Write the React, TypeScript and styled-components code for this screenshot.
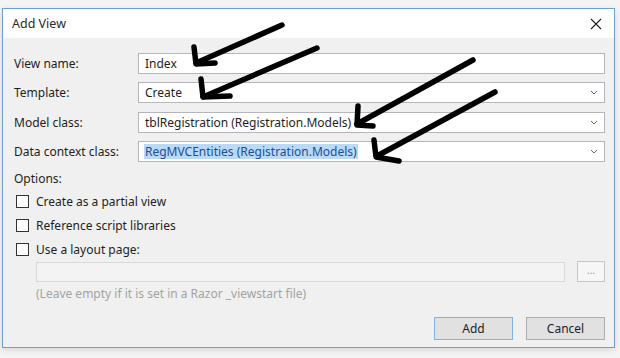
import { Fragment } from "react";
import styled, { createGlobalStyle } from "styled-components";

const GlobalStyle = createGlobalStyle`
   html, body {
      margin: 0;
      padding: 0;
      background: #f4f4f4;
   }
   body {
      font-family: "Noto Sans", "Open Sans", sans-serif;
      font-size: 12px;
      color: #1e1e1e;
   }
`;

// Área da captura: a janela fica com pequena margem em volta
const Screen = styled.div`
   position: relative;
   width: 620px;
   height: 358px;
   padding: 8px 5px 10px 2px;
   box-sizing: border-box;
   overflow: hidden;
`;

const Window = styled.section`
   height: 100%;
   box-sizing: border-box;
   border: 1px solid #6e9fd4;
   background: #f0f0f0;
   display: flex;
   flex-direction: column;
   box-shadow: 0 2px 6px rgba(0, 0, 0, 0.12);
`;

const TitleBar = styled.header`
   height: 29px;
   flex: none;
   background: #ffffff;
   display: flex;
   align-items: center;
   justify-content: space-between;
   padding: 0 6px 0 9px;
`;

const TitleText = styled.span`
   font-size: 12.5px;
   color: #2b2b2b;
`;

const CloseButton = styled.button`
   width: 24px;
   height: 22px;
   border: none;
   background: transparent;
   padding: 0;
   display: flex;
   align-items: center;
   justify-content: center;
`;

const Body = styled.div`
   flex: 1;
   display: flex;
   flex-direction: column;
   padding: 15px 9px 7px 11px;
`;

const FieldGrid = styled.div`
   display: grid;
   grid-template-columns: 124px 1fr;
   grid-auto-rows: 21px;
   row-gap: 8.4px;
   align-items: center;
`;

const Label = styled.label`
   white-space: nowrap;
`;

const Field = styled.div`
   height: 21px;
   box-sizing: border-box;
   border: 1px solid #b4b6bb;
   background: #ffffff;
   display: flex;
   align-items: center;
   justify-content: space-between;
   padding: 0 6px 0 5px;
`;

const FieldText = styled.span<{ $selected?: boolean }>`
   padding: 0 1px;
   background: ${({ $selected }) => ($selected ? "#b9d9f5" : "transparent")};
   color: ${({ $selected }) => ($selected ? "#1a4f9a" : "#1e1e1e")};
   line-height: 15px;
`;

const SectionLabel = styled.div`
   margin-top: 9px;
   line-height: 16px;
`;

const OptionList = styled.div`
   display: flex;
   flex-direction: column;
   gap: 8px;
   margin-top: 6px;
   padding-left: 2px;
`;

const OptionRow = styled.label`
   display: flex;
   align-items: center;
   gap: 7px;
   height: 16px;
`;

const CheckBox = styled.span`
   width: 13px;
   height: 13px;
   box-sizing: border-box;
   border: 1px solid #333333;
   background: #ffffff;
   flex: none;
`;

const LayoutRow = styled.div`
   display: flex;
   align-items: center;
   gap: 12px;
   margin-top: 4px;
   padding-left: 22px;
`;

const DisabledInput = styled.div`
   flex: 1;
   height: 20px;
   box-sizing: border-box;
   border: 1px solid #d9d9d9;
   background: #f3f3f3;
`;

const BrowseButton = styled.button`
   width: 28px;
   height: 21px;
   box-sizing: border-box;
   border: 1px solid #c6c6c6;
   background: #f6f6f6;
   color: #9a9a9a;
   font-family: inherit;
   font-size: 10px;
   padding: 0 0 4px;
`;

const Hint = styled.div`
   color: #a3a3a3;
   margin-top: 4px;
   padding-left: 22px;
   line-height: 16px;
`;

const ButtonBar = styled.div`
   margin-top: auto;
   display: flex;
   justify-content: flex-end;
   gap: 13px;
`;

const DialogButton = styled.button<{ $primary?: boolean }>`
   width: 79px;
   height: 23px;
   box-sizing: border-box;
   border: 1px solid ${({ $primary }) => ($primary ? "#7fb2e6" : "#adadad")};
   background: #e1e1e1;
   font-family: inherit;
   font-size: 12px;
   color: #1e1e1e;
   padding: 0;
`;

// Setas desenhadas à mão por cima do diálogo
const Annotations = styled.svg`
   position: absolute;
   top: 0;
   left: 0;
   pointer-events: none;
`;

function Chevron() {
   return (
      <svg width="8" height="5" viewBox="0 0 8 5">
         <path d="M1 1 L4 4 L7 1" fill="none" stroke="#6a6a6a" strokeWidth="1" />
      </svg>
   );
}

const fields = [
   { label: "View name:", value: "Index", select: false, selected: false },
   { label: "Template:", value: "Create", select: true, selected: false },
   { label: "Model class:", value: "tblRegistration (Registration.Models)", select: true, selected: false },
   { label: "Data context class:", value: "RegMVCEntities (Registration.Models)", select: true, selected: true },
];

const options = ["Create as a partial view", "Reference script libraries", "Use a layout page:"];

const arrows = [
   { line: "M282 25 L196 63", head: "M194 47 L196 64 L215 63" },
   { line: "M317 48 L203 97", head: "M201 79 L203 97 L230 96" },
   { line: "M473 60 L357 124", head: "M358 106 L357 125 L373 126" },
   { line: "M495 92 L377 156", head: "M374 140 L376 157 L399 161" },
];

export default function App() {
   return (
      <Screen>
         <GlobalStyle />
         <Window>
            <TitleBar>
               <TitleText>Add View</TitleText>
               <CloseButton aria-label="Close">
                  <svg width="12" height="12" viewBox="0 0 12 12">
                     <path d="M1 1 L11 11 M11 1 L1 11" stroke="#1e1e1e" strokeWidth="1.1" />
                  </svg>
               </CloseButton>
            </TitleBar>
            <Body>
               <FieldGrid>
                  {fields.map((f) => (
                     <Fragment key={f.label}>
                        <Label>{f.label}</Label>
                        <Field>
                           <FieldText $selected={f.selected}>{f.value}</FieldText>
                           {f.select && <Chevron />}
                        </Field>
                     </Fragment>
                  ))}
               </FieldGrid>

               <SectionLabel>Options:</SectionLabel>
               <OptionList>
                  {options.map((o) => (
                     <OptionRow key={o}>
                        <CheckBox />
                        {o}
                     </OptionRow>
                  ))}
               </OptionList>

               <LayoutRow>
                  <DisabledInput />
                  <BrowseButton>...</BrowseButton>
               </LayoutRow>
               <Hint>(Leave empty if it is set in a Razor _viewstart file)</Hint>

               <ButtonBar>
                  <DialogButton $primary>Add</DialogButton>
                  <DialogButton>Cancel</DialogButton>
               </ButtonBar>
            </Body>
         </Window>

         <Annotations width="620" height="358" viewBox="0 0 620 358">
            {arrows.map((a, i) => (
               <g key={i} fill="none" stroke="#000" strokeWidth="5.5" strokeLinecap="round" strokeLinejoin="round">
                  <path d={a.line} />
                  <path d={a.head} />
               </g>
            ))}
         </Annotations>
      </Screen>
   );
}
